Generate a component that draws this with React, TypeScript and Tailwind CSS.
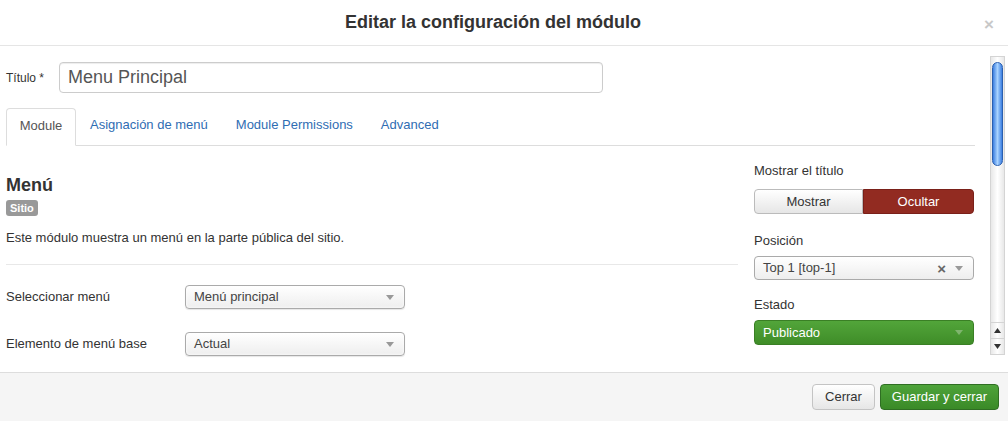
import React from "react";

function Caret({ className = "" }: { className?: string }) {
  return (
    <svg width="8" height="5" viewBox="0 0 8 5" className={className}>
      <path d="M0 0h8L4 5z" fill="currentColor" />
    </svg>
  );
}

function SelectBox({ value, width }: { value: string; width: string }) {
  return (
    <div
      className={`${width} flex h-[24px] items-center justify-between rounded-[4px] border border-[#aaaaaa] bg-gradient-to-b from-white to-[#eeeeee] pl-[8px] pr-[10px] text-[13px] text-[#444] shadow-[inset_0_0_3px_white,0_1px_1px_rgba(0,0,0,0.1)]`}
    >
      <span>{value}</span>
      <Caret className="text-[#999]" />
    </div>
  );
}

function Scrollbar() {
  return (
    <div className="mr-[3px] mt-[10px] flex h-[299px] w-[15px] flex-col border border-[#d4d4d4] bg-gradient-to-r from-[#e8e8e8] via-white to-[#e8e8e8]">
      <div className="flex-1 pt-[5px]">
        <div className="mx-auto h-[104px] w-[11px] rounded-full border border-[#2a5fb0] bg-gradient-to-r from-[#3b7ee0] via-[#a9d3ff] to-[#3b7ee0]" />
      </div>
      <div className="flex h-[16px] items-center justify-center border-t border-[#d4d4d4] text-[#333]">
        <svg width="7" height="5" viewBox="0 0 7 5">
          <path d="M0 5h7L3.5 0z" fill="currentColor" />
        </svg>
      </div>
      <div className="flex h-[16px] items-center justify-center border-t border-[#d4d4d4] text-[#333]">
        <svg width="7" height="5" viewBox="0 0 7 5">
          <path d="M0 0h7L3.5 5z" fill="currentColor" />
        </svg>
      </div>
    </div>
  );
}

export default function App() {
  const tabs = ["Asignación de menú", "Module Permissions", "Advanced"];

  return (
    <div className="flex h-[421px] w-[1008px] flex-col overflow-hidden bg-white font-['Liberation_Sans',Arial,sans-serif] text-[#333]">
      <header className="relative flex h-[46px] shrink-0 items-center justify-center border-b border-[#e5e5e5] pr-[22px]">
        <h1 className="text-[18px] font-bold text-[#333]">Editar la configuración del módulo</h1>
        <span className="absolute right-[14px] top-[12px] text-[17px] font-bold text-[#c8c8c8]">×</span>
      </header>

      <main className="flex min-h-0 flex-1">
        <div className="w-[975px] shrink-0 overflow-hidden pl-[6px] pt-[16px]">
          <div className="flex items-center">
            <label className="w-[53px] text-[12px] text-[#333]">Título *</label>
            <div className="flex h-[31px] w-[544px] items-center rounded-[4px] border border-[#cccccc] px-[8px] text-[18px] text-[#555] shadow-[inset_0_1px_1px_rgba(0,0,0,0.075)]">
              Menu Principal
            </div>
          </div>

          <nav className="mt-[15px] flex h-[38px] items-end border-b border-[#dddddd] text-[13px]">
            <div className="-mb-px flex h-[38px] w-[70px] items-center justify-center rounded-t-[4px] border border-b-white border-[#dddddd] bg-white pb-[3px] text-[#555]">
              Module
            </div>
            {tabs.map((t) => (
              <div key={t} className="flex h-[37px] items-center px-[14px] pb-[3px] text-[#2f6db3]">
                {t}
              </div>
            ))}
          </nav>

          <section className="flex pt-[16px]">
            <div className="flex w-[732px] shrink-0 flex-col items-start">
              <h2 className="mt-[12px] text-[18px] font-bold leading-[22px] text-[#333]">Menú</h2>
              <span className="mt-[4px] block rounded-[3px] bg-[#999999] px-[4px] py-[1px] text-[11px] font-bold leading-[14px] text-white">
                Sitio
              </span>
              <p className="mt-[13px] text-[13px] leading-[18px]">Este módulo muestra un menú en la parte pública del sitio.</p>
              <div className="mt-[17px] w-full border-t border-[#e8e8e8]" />
              <div className="mt-[20px] flex items-center">
                <span className="w-[179px] text-[13px]">Seleccionar menú</span>
                <SelectBox value="Menú principal" width="w-[220px]" />
              </div>
              <div className="mt-[23px] flex items-center">
                <span className="w-[179px] text-[13px]">Elemento de menú base</span>
                <SelectBox value="Actual" width="w-[220px]" />
              </div>
            </div>

            <aside className="ml-[16px] w-[220px] shrink-0 text-[13px]">
              <p className="leading-[18px]">Mostrar el título</p>
              <div className="mt-[9px] flex h-[25px]">
                <div className="flex w-[109px] items-center justify-center rounded-l-[4px] border border-[#bbbbbb] bg-gradient-to-b from-white to-[#e6e6e6] text-[#333]">
                  Mostrar
                </div>
                <div className="flex flex-1 items-center justify-center rounded-r-[4px] border border-[#7a2019] bg-[#922b21] text-white">
                  Ocultar
                </div>
              </div>
              <p className="mt-[18px] leading-[18px]">Posición</p>
              <div className="mt-[6px] flex h-[24px] items-center justify-between rounded-[4px] border border-[#aaaaaa] bg-gradient-to-b from-white to-[#eeeeee] pl-[8px] pr-[10px] text-[#444]">
                <span>Top 1 [top-1]</span>
                <span className="flex items-center gap-[9px]">
                  <span className="text-[15px] font-bold leading-none text-[#666]">×</span>
                  <Caret className="text-[#999]" />
                </span>
              </div>
              <p className="mt-[16px] leading-[18px]">Estado</p>
              <div className="mt-[6px] flex h-[25px] items-center justify-between rounded-[4px] border border-[#3a7f25] bg-gradient-to-b from-[#52a53a] to-[#3f8d28] pl-[8px] pr-[10px] text-white">
                <span>Publicado</span>
                <Caret className="text-[#7fb56e]" />
              </div>
            </aside>
          </section>
        </div>
        <div className="flex flex-1 justify-end">
          <Scrollbar />
        </div>
      </main>

      <footer className="flex h-[49px] shrink-0 items-center justify-end gap-[5px] border-t border-[#dddddd] bg-[#f5f5f5] pr-[9px] text-[13px]">
        <div className="flex h-[26px] w-[63px] items-center justify-center rounded-[4px] border border-[#c4c4c4] bg-gradient-to-b from-white to-[#e6e6e6] text-[#333]">
          Cerrar
        </div>
        <div className="flex h-[26px] w-[119px] items-center justify-center rounded-[4px] border border-[#2f6e23] bg-gradient-to-b from-[#4ea33a] to-[#3a8a27] text-white">
          Guardar y cerrar
        </div>
      </footer>
    </div>
  );
}
